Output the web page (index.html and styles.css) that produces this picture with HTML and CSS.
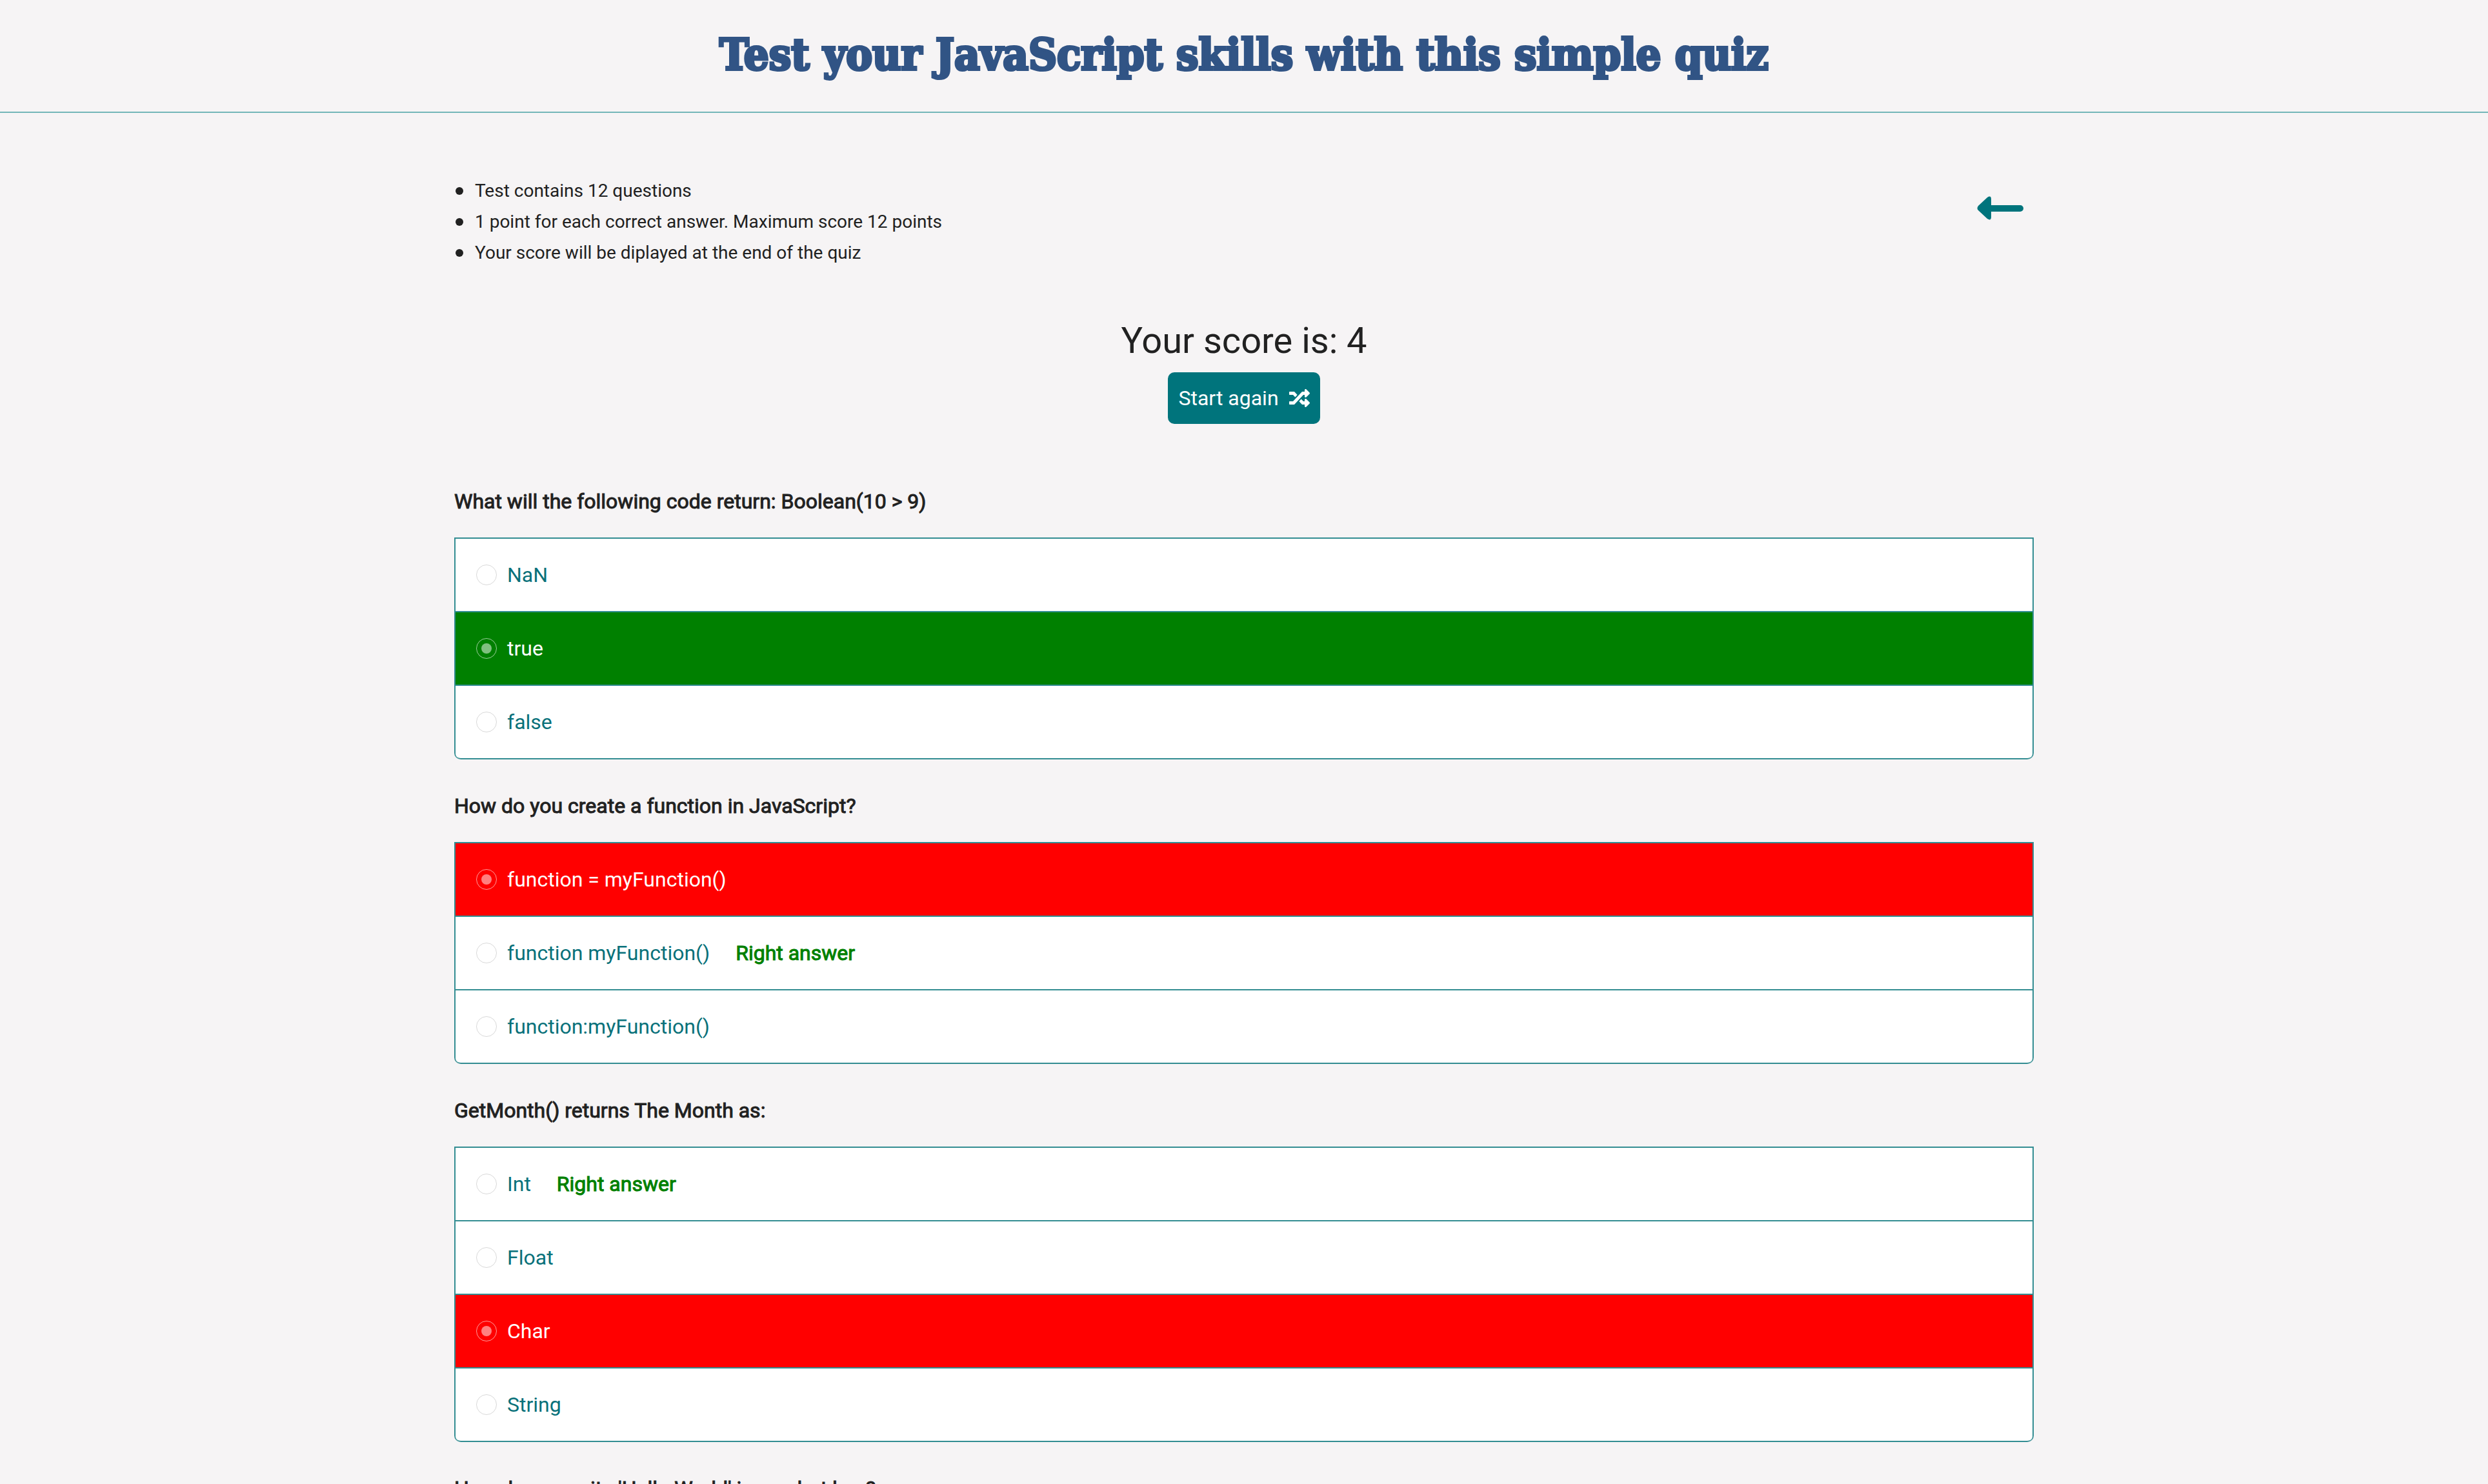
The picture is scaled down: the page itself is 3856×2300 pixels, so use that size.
FILE: index.html
```html
<!DOCTYPE html>
<html lang="en">
<head>
<meta charset="utf-8">
<meta name="viewport" content="width=device-width, initial-scale=1">
<title>JavaScript quiz</title>
<link rel="stylesheet" href="styles.css">
</head>
<body>
<header class="site-header">
  <h1 class="site-title">Test your JavaScript skills with this simple quiz</h1>
</header>
<main class="container">
  <section class="intro">
    <ul class="rules">
      <li>Test contains 12 questions</li>
      <li>1 point for each correct answer. Maximum score 12 points</li>
      <li>Your score will be diplayed at the end of the quiz</li>
    </ul>
    <a class="back" href="#" aria-label="Back">
      <svg class="back-icon" viewBox="0 0 72 38" aria-hidden="true"><path d="M16 2Q22-2 22 5V14H67A5 5 0 0 1 67 24H22V32Q22 39 16 35L2 22Q-1 19 2 15Z"/></svg>
    </a>
  </section>
  <section class="result">
    <h2 class="score">Your score is: 4</h2>
    <button class="restart" type="button">
      <span>Start again</span>
      <svg class="shuffle-icon" viewBox="0 0 512 512" aria-hidden="true"><path d="M504.971 359.029c9.373 9.373 9.373 24.569 0 33.941l-80 79.984c-15.01 15.01-40.971 4.49-40.971-16.971V416h-58.785a12.004 12.004 0 0 1-8.773-3.812l-70.556-75.596 53.333-57.143L352 336h32v-39.981c0-21.438 25.943-31.998 40.971-16.971l80 79.981zM12 176h84l52.781 56.551 53.333-57.143-70.556-75.596A11.999 11.999 0 0 0 122.785 96H12c-6.627 0-12 5.373-12 12v56c0 6.627 5.373 12 12 12zm372 0v39.984c0 21.46 25.961 31.98 40.971 16.971l80-79.984c9.373-9.373 9.373-24.569 0-33.941l-80-79.981C409.943 24.021 384 34.582 384 56.019V96h-58.785a12.004 12.004 0 0 0-8.773 3.812L96 336H12c-6.627 0-12 5.373-12 12v56c0 6.627 5.373 12 12 12h110.785c3.326 0 6.503-1.381 8.773-3.812L352 176h32z"/></svg>
    </button>
  </section>
  <form class="quiz">
    <fieldset class="question">
      <legend class="prompt">What will the following code return: Boolean(10 &gt; 9)</legend>
      <div class="answers">
        <label class="answer"><input class="radio" type="radio" name="q1" disabled><span>NaN</span></label>
        <label class="answer answer-correct"><input class="radio" type="radio" name="q1" checked disabled><span>true</span></label>
        <label class="answer"><input class="radio" type="radio" name="q1" disabled><span>false</span></label>
      </div>
    </fieldset>
    <fieldset class="question">
      <legend class="prompt">How do you create a function in JavaScript?</legend>
      <div class="answers">
        <label class="answer answer-wrong"><input class="radio" type="radio" name="q2" checked disabled><span>function = myFunction()</span></label>
        <label class="answer"><input class="radio" type="radio" name="q2" disabled><span>function myFunction()</span><strong class="hint">Right answer</strong></label>
        <label class="answer"><input class="radio" type="radio" name="q2" disabled><span>function:myFunction()</span></label>
      </div>
    </fieldset>
    <fieldset class="question">
      <legend class="prompt">GetMonth() returns The Month as:</legend>
      <div class="answers">
        <label class="answer"><input class="radio" type="radio" name="q3" disabled><span>Int</span><strong class="hint">Right answer</strong></label>
        <label class="answer"><input class="radio" type="radio" name="q3" disabled><span>Float</span></label>
        <label class="answer answer-wrong"><input class="radio" type="radio" name="q3" checked disabled><span>Char</span></label>
        <label class="answer"><input class="radio" type="radio" name="q3" disabled><span>String</span></label>
      </div>
    </fieldset>
    <fieldset class="question">
      <legend class="prompt">How do you write 'Hello World' in an alert box?</legend>
    </fieldset>
  </form>
</main>
</body>
</html>
```
FILE: styles.css
```css
:root {
  --teal: #00747c;
  --ink: #212121;
  --line: #338d92;
}

* {
  box-sizing: border-box;
}

html {
  scrollbar-width: none;
}

body {
  margin: 0;
  background: #f6f4f5;
  color: var(--ink);
  font-family: Roboto, "Liberation Sans", sans-serif;
  font-size: 32px;
  line-height: 48px;
}

.site-header {
  padding: 36px 32px 41px;
  border-bottom: 2px solid #74b6b8;
}

.site-title {
  margin: 0;
  color: #315485;
  font-family: "DejaVu Serif Condensed", "DejaVu Serif", serif;
  font-stretch: condensed;
  font-size: 68px;
  font-weight: 700;
  line-height: 96px;
  text-align: center;
  -webkit-text-stroke: 4px #315485;
}

.container {
  max-width: 2448px;
  margin: 0 auto;
  padding-top: 97px;
}

.intro {
  display: flex;
  justify-content: space-between;
  align-items: flex-start;
}

.rules {
  margin: 0;
  padding: 0;
  list-style: none;
  font-size: 28px;
}

.rules li {
  display: flex;
  align-items: center;
  gap: 18px;
}

.rules li::before {
  content: "";
  width: 12px;
  height: 12px;
  margin-left: 2px;
  border-radius: 50%;
  background: var(--ink);
}

.back {
  display: flex;
  padding: 32px 16px;
}

.back-icon {
  width: 72px;
  height: 38px;
  fill: var(--teal);
}

.result {
  display: flex;
  flex-direction: column;
  align-items: center;
  gap: 17px;
  margin-top: 80px;
}

.score {
  margin: 0;
  font-size: 56px;
  font-weight: 400;
  line-height: 64px;
}

.restart {
  display: flex;
  align-items: center;
  gap: 16px;
  padding: 16px;
  border: 0;
  border-radius: 10px;
  background: var(--teal);
  color: #fff;
  font: inherit;
}

.shuffle-icon {
  width: 32px;
  height: 32px;
  fill: #fff;
}

.quiz {
  margin-top: 96px;
}

.question {
  min-width: 0;
  margin: 0 0 48px;
  padding: 0;
  border: 0;
}

.prompt {
  margin-bottom: 32px;
  padding: 0;
  -webkit-text-stroke: 1px var(--ink);
}

.answers {
  overflow: hidden;
  border: 2px solid var(--line);
  border-bottom: 0;
  border-radius: 0 0 10px 10px;
}

.answer {
  display: flex;
  align-items: center;
  padding: 32px;
  border-bottom: 2px solid var(--line);
  background: #fff;
  color: #09717a;
}

.answer:last-child {
  border-radius: 0 0 8px 8px;
}

.answer-correct {
  background: #008000;
  color: #fff;
}

.answer-wrong {
  background: #f00;
  color: #fff;
}

.radio {
  display: grid;
  place-items: center;
  width: 32px;
  height: 32px;
  margin: 0 16px 0 0;
  border: 1px solid #d8d8d8;
  border-radius: 50%;
  appearance: none;
}

.radio:checked {
  border-color: rgba(255, 255, 255, 0.6);
}

.radio:checked::before {
  content: "";
  width: 16px;
  height: 16px;
  border-radius: 50%;
  background: rgba(255, 255, 255, 0.5);
}

.hint {
  margin-left: 40px;
  color: #008000;
  font-weight: 400;
  -webkit-text-stroke: 1px #008000;
}
```
